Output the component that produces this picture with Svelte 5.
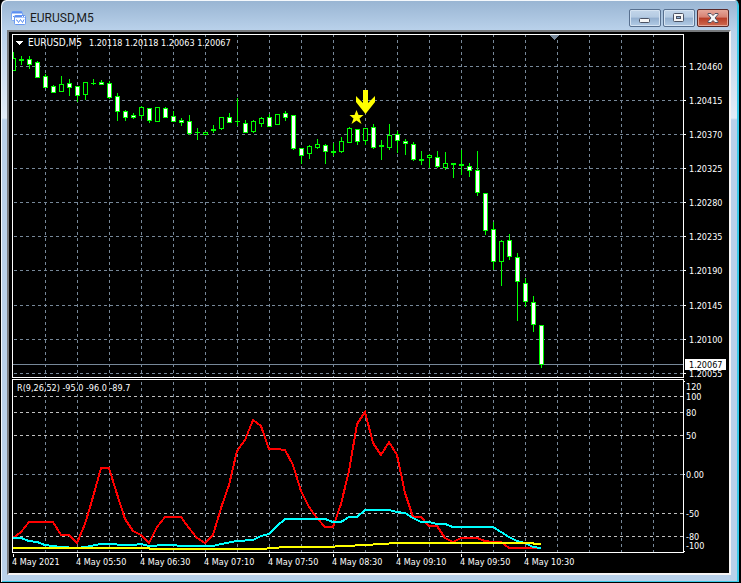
<script>
  const STEP = 8
  const PRICE_TOP = 35
  const IND_TOP = 380

  // [high, body top, body bottom, low, hollow] in canvas pixels, one per bar
  const bars = [
    [52, 58, 70, 70, 1], [56, 59, 60, 64, 0], [56, 59, 64, 68, 0], [61, 62, 77, 77, 0],
    [74, 76, 87, 87, 0], [85, 86, 92, 92, 0], [76, 84, 91, 91, 1], [79, 83, 87, 95, 0],
    [86, 86, 95, 101, 0], [82, 82, 94, 99, 1], [79, 83, 83, 84, 0], [80, 82, 84, 84, 0],
    [81, 83, 97, 98, 0], [93, 96, 111, 120, 0], [110, 111, 117, 120, 0], [113, 115, 117, 118, 0],
    [106, 107, 115, 118, 1], [108, 108, 120, 122, 0], [107, 107, 121, 121, 1], [107, 108, 117, 117, 0],
    [111, 116, 121, 121, 0], [118, 120, 122, 125, 0], [115, 121, 133, 134, 0], [128, 132, 132, 139, 0],
    [132, 132, 134, 134, 1], [125, 129, 130, 132, 0], [117, 117, 128, 129, 1], [113, 117, 122, 122, 0],
    [98, 121, 121, 125, 0], [120, 123, 132, 132, 0], [120, 121, 131, 132, 1], [117, 118, 123, 126, 1],
    [114, 117, 126, 126, 0], [114, 114, 124, 124, 1], [111, 113, 117, 120, 0], [115, 115, 148, 149, 0],
    [148, 148, 155, 163, 0], [145, 146, 153, 158, 1], [139, 144, 147, 148, 1], [144, 145, 151, 163, 0],
    [143, 151, 152, 155, 0], [137, 141, 151, 152, 1], [127, 128, 142, 142, 1], [129, 129, 141, 144, 0],
    [128, 128, 140, 144, 1], [124, 127, 147, 148, 0], [140, 145, 146, 159, 0], [124, 135, 147, 149, 1],
    [131, 134, 140, 152, 0], [139, 141, 143, 154, 0], [142, 144, 159, 160, 0], [151, 159, 160, 164, 0],
    [154, 155, 157, 167, 1], [151, 157, 166, 167, 0], [152, 163, 167, 169, 1], [163, 163, 164, 177, 0],
    [150, 164, 165, 174, 0], [163, 166, 170, 176, 0], [151, 170, 192, 195, 0], [193, 193, 230, 234, 0],
    [222, 229, 261, 269, 0], [240, 241, 261, 285, 1], [234, 240, 256, 259, 0], [253, 257, 281, 320, 0],
    [278, 283, 301, 306, 0], [296, 302, 324, 331, 0], [325, 325, 364, 367, 0],
  ]

  const fast = '13,538 21,532 29,522 53,522 61,535 69,535 77,543 85,524 93,497 101,468 109,468 117,494 125,519 133,531 141,535 149,543 157,527 165,517 181,517 189,528 197,538 205,543 213,535 221,508 229,485 237,451 245,440 253,420 261,426 269,449 277,449 285,450 293,465 301,491 309,507 317,518 325,527 333,527 341,504 349,471 357,424 365,412 373,443 381,455 389,442 397,455 405,493 413,517 421,517 429,526 437,526 445,538 453,542 461,538 477,538 485,541 493,542 501,542 509,548 541,548'
  const middle = '13,538 21,538 29,541 37,542 45,545 53,546 61,547 77,548 85,547 101,544 133,545 141,544 149,546 165,545 189,546 213,546 221,544 237,541 253,540 261,536 269,534 277,526 285,519 325,519 333,522 341,522 349,517 357,517 365,510 389,510 397,512 405,513 413,518 421,522 429,522 437,524 445,524 453,527 493,527 501,532 509,537 517,541 525,543 533,547 541,548'
  const slow = '13,548 149,548 150,549 261,549 285,547 325,547 365,545 397,543 533,543 534,544 541,544'

  const prices = [
    [66, '1.20460'], [100, '1.20415'], [134, '1.20370'], [168, '1.20325'], [202, '1.20280'],
    [236, '1.20235'], [270, '1.20190'], [305, '1.20145'], [339, '1.20100'], [373, '1.20055'],
  ]
  const levels = [
    [386, '120'], [396, '100'], [412, '80'], [435, '50'], [474, '0.00'],
    [513, '-50'], [536, '-80'], [545, '-100'],
  ]
  const levelLines = [396, 412, 435, 513, 536]
  const times = ['4 May 2021', '4 May 05:50', '4 May 06:30', '4 May 07:10', '4 May 07:50', '4 May 08:30', '4 May 09:10', '4 May 09:50', '4 May 10:30']

  // enough columns for a wide window, the svg clips the rest
  const columns = Array.from({ length: 80 }, (_, i) => 32 + i * 32)
</script>

<main class="window">
  <header class="titlebar">
    <svg class="app-icon" width="15" height="14" viewBox="0 0 15 14">
      <rect x="0.5" y="0.5" width="11" height="9" rx="1" fill="#fff" stroke="#7ba6f2" />
      <path d="M1 1.5h10" stroke="#5c8ff0" stroke-width="2" />
      <path d="M2 6l1-1 1 1 1-2" fill="none" stroke="#5c8ff0" />
      <rect x="3.5" y="4.5" width="11" height="9" rx="1" fill="#fff" stroke="#6a9af2" />
      <path d="M4 5.500h10" stroke="#5c8ff0" stroke-width="2" />
      <path d="M11 5.500h1M13 5.500h1" stroke="#fff" />
      <path d="M5 9h1l1.500 2.500 2-3 2 3 1.500-3" fill="none" stroke="#5c8ff0" />
    </svg>
    <h1>EURUSD,M5</h1>
    <div class="controls">
      <button aria-label="Minimize">
        <svg width="12" height="12" viewBox="0 0 12 12"><rect x="0.5" y="6.5" width="10" height="4" rx="1" fill="#f6f6f6" stroke="#4b5263" /></svg>
      </button>
      <button aria-label="Maximize">
        <svg width="12" height="12" viewBox="0 0 12 12">
          <rect x="0.5" y="1.5" width="10" height="8" rx="1" fill="#f6f6f6" stroke="#4b5263" />
          <rect x="3.5" y="4.5" width="4" height="2" fill="#8fb0d6" stroke="#4b5263" />
        </svg>
      </button>
      <button class="close" aria-label="Close">
        <svg width="12" height="12" viewBox="0 0 12 12">
          <path d="M1 1.500h3l2 2 2-2h3v1l-3 3.500 3 3.500v1h-3l-2-2-2 2h-3v-1l3-3.500-3-3.500z" fill="#f8f8f8" stroke="#53505f" />
        </svg>
      </button>
    </div>
  </header>

  <div class="client">
    <section class="chart">
      <div class="row">
        <div class="panel">
          <svg class="price" shape-rendering="crispEdges">
            {#each columns as x}
              <line class="grid" x1={x + 0.5} x2={x + 0.5} y1="-1" y2="100%" />
            {/each}
            {#each prices as [y]}
              <line class="grid" x1="1" x2="100%" y1={y - PRICE_TOP + 0.5} y2={y - PRICE_TOP + 0.5} />
            {/each}
            <line class="bid" x1="0" x2="100%" y1="329.5" y2="329.5" />
            {#each bars as [high, top, bottom, low, hollow], i}
              <rect class="wick" x={i * STEP} y={high - PRICE_TOP} width="1" height={low - high + 1} />
              <rect class="wick" x={i * STEP - 2} y={top - PRICE_TOP} width="5" height={bottom - top + 1} />
              {#if bottom - top > 1}
                <rect class:hollow={hollow} class="body" x={i * STEP - 1} y={top - PRICE_TOP + 1} width="3" height={bottom - top - 1} />
              {/if}
            {/each}
            <g class="signal" shape-rendering="auto">
              <path d="M350 55h5v13l7-7v6l-9.500 12-9.500-12v-6l7 7z" />
              <path d="M343.500 75l2 5h5l-4 3.500 2 5.500-5-3.500-5 3.500 2-5.500-4-3.500h5z" />
            </g>
            <path class="shift" d="M537 0h9l-4.500 5z" />
            <path class="white" d="M3 6h7l-3.500 4z" />
            <text class="symbol" x="15" y="11">EURUSD,M5</text>
            <text x="76" y="11">1.20118 1.20118 1.20063 1.20067</text>
          </svg>
        </div>
        <svg class="scale price-scale" shape-rendering="crispEdges">
          {#each prices as [y, label]}
            <rect class="white" x="0" y={y - PRICE_TOP + 1} width="2" height="1" />
            <text x="5" y={y - PRICE_TOP + 5}>{label}</text>
          {/each}
          <rect class="white" x="1" y="325" width="41" height="11" />
          <text class="current" x="5" y="334">1.20067</text>
        </svg>
      </div>

      <div class="row">
        <div class="panel">
          <svg class="indicator" shape-rendering="crispEdges">
            {#each columns as x}
              <line class="grid" x1={x + 0.5} x2={x + 0.5} y1="2" y2="100%" />
            {/each}
            <line class="grid" x1="1" x2="100%" y1="94.5" y2="94.5" />
            {#each levelLines as y}
              <line class="level" x1="1" x2="100%" y1={y - IND_TOP + 0.5} y2={y - IND_TOP + 0.5} />
            {/each}
            <g class="lines" transform="translate(-13 -380)">
              <polyline points={fast} stroke="#f00" />
              <polyline points={middle} stroke="#0ff" />
              <polyline points={slow} stroke="#ff0" />
            </g>
            <text x="4" y="11">R(9,26,52) -95.0 -96.0 -89.7</text>
          </svg>
        </div>
        <svg class="scale indicator-scale" shape-rendering="crispEdges">
          <rect class="white" x="0" y="2" width="1" height="1" />
          <rect class="white" x="0" y="95" width="1" height="1" />
          <rect class="white" x="0" y="172" width="1" height="1" />
          {#each levels as [y, label]}
            <text x="2" y={y - IND_TOP + 5}>{label}</text>
          {/each}
        </svg>
      </div>

      <svg class="timeline" shape-rendering="crispEdges">
        {#each times as time, i}
          <rect class="white" x={1 + i * 64} y="0" width="1" height="3" />
          <text x={i * 64} y="11">{time}</text>
        {/each}
      </svg>
    </section>
  </div>
</main>

<style>
  :global(body) {
    background: #000;
  }

  .window {
    box-sizing: border-box;
    min-height: 100vh;
    display: flex;
    flex-direction: column;
    padding: 0 8px 7px 6px;
    background:
      linear-gradient(#98b4d2 0, #b9d1ea 30px, #e2ecf7 118px, #b9d1ea 120px);
    border: solid #000;
    border-width: 0 2px 1px 1px;
    border-radius: 6px 6px 0 0;
    box-shadow: inset 1px 1px #f4f8fc, inset -2px -1px #3ccbe8;
    font-family: "DejaVu Sans Condensed", "DejaVu Sans", sans-serif;
  }

  .titlebar {
    display: flex;
    align-items: center;
    height: 30px;
    padding: 6px 2px 0 4px;
    box-sizing: border-box;
  }

  h1 {
    flex: 1;
    margin: 0 0 0 4px;
    font: 12px Roboto, "Open Sans", sans-serif;
    color: #1b1b1b;
  }

  .controls {
    display: flex;
    gap: 2px;
  }

  button {
    display: flex;
    align-items: center;
    justify-content: center;
    width: 32px;
    height: 18px;
    padding: 0;
    border: 1px solid #58708f;
    border-radius: 2px;
    background: linear-gradient(#c3d6ea 0, #b4cae2 45%, #93afcf 50%, #b3cce6 100%);
    box-shadow: inset 0 0 0 1px #d5e3f2;
  }

  .close {
    border-color: #5a2a2a;
    background: linear-gradient(#e6a79b 0, #d78171 45%, #b83c26 50%, #cf6b50 100%);
    box-shadow: inset 0 0 0 1px #e6a595;
  }

  .client {
    flex: 1;
    display: flex;
    background: #000;
    border: 2px solid;
    border-color: #77797c #f6f4f4 #f6f4f4 #77797c;
  }

  .chart {
    flex: 1;
    min-width: 0;
    display: flex;
    flex-direction: column;
    padding: 2px 0 0 3px;
  }

  .row {
    display: flex;
    margin-bottom: 1px;
  }

  .panel {
    flex: 1;
    min-width: 0;
    border: 1px solid #fff;
  }

  svg {
    display: block;
    flex: none;
  }

  .price,
  .indicator,
  .timeline {
    width: 100%;
  }

  .price {
    height: 342px;
  }

  .indicator {
    height: 172px;
  }

  .scale {
    width: 45px;
  }

  .price-scale {
    height: 344px;
  }

  .indicator-scale {
    height: 174px;
  }

  .timeline {
    height: 18px;
  }

  text {
    font-size: 9px;
    fill: #fff;
    white-space: pre;
  }

  .symbol {
    font-size: 10px;
  }

  .current {
    fill: #000;
  }

  .grid {
    stroke: #778899;
    stroke-dasharray: 3 3;
  }

  .level {
    stroke: #c0c0c0;
    stroke-dasharray: 3 3;
  }

  .bid {
    stroke: #778899;
  }

  .wick {
    fill: #0f0;
  }

  .body,
  .white {
    fill: #fff;
  }

  .hollow {
    fill: #000;
  }

  .signal {
    fill: #ff0;
  }

  .shift {
    fill: #778899;
  }

  .lines {
    fill: none;
    stroke-width: 2;
  }
</style>
